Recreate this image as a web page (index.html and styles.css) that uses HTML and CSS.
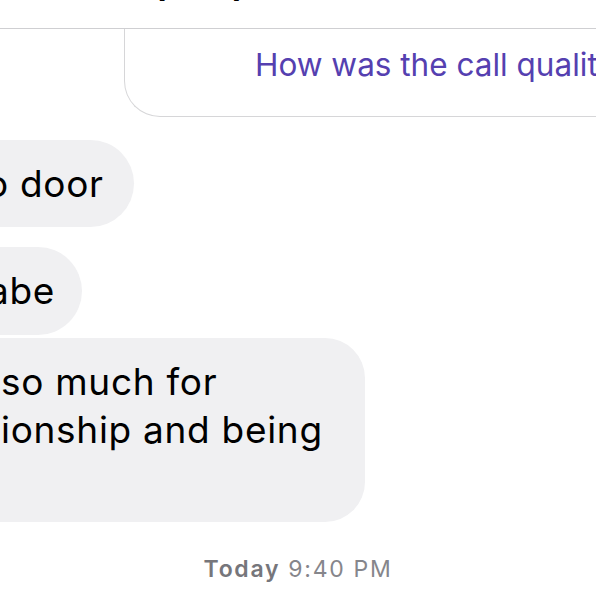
FILE: index.html
```html
<!DOCTYPE html>
<html>
<head>
<meta charset="utf-8">
<link rel="stylesheet" href="styles.css">
</head>
<body>
<div class="screen">
  <header class="topbar">
    <div class="title">(Dad)</div>
  </header>
  <div class="card">
    <div class="card-text">How was the call quality?</div>
  </div>
  <div class="thread">
    <div class="bubble b1"><span class="line cut-o">o door</span></div>
    <div class="bubble b2"><span class="line cut-a">abe</span></div>
    <div class="bubble b3">
      <span class="line">so much for</span>
      <span class="line">ionship and being</span>
      <span class="line">&nbsp;</span>
    </div>
  </div>
  <div class="stamp"><span class="day">Today</span> 9:40 PM</div>
</div>
</body>
</html>
```

FILE: styles.css
```css
html, body {
  margin: 0;
  padding: 0;
  background: #ffffff;
  overflow: hidden;
}
.screen {
  width: 596px;
  height: 596px;
  overflow: hidden;
  font-family: Inter, "Noto Sans", sans-serif;
  color: #000;
}
.topbar {
  height: 28px;
  border-bottom: 1px solid #cfcfd2;
  overflow: hidden;
}
.title {
  margin-top: -33px;
  padding-left: 153px;
  font-size: 34px;
  line-height: 34px;
  font-weight: 700;
  white-space: nowrap;
}
.card {
  margin-left: 124px;
  margin-right: -120px;
  height: 87px;
  border-left: 1px solid #d6d6d8;
  border-bottom: 1px solid #d6d6d8;
  border-bottom-left-radius: 36px;
}
.card-text {
  padding-top: 17px;
  padding-left: 130px;
  font-size: 31.5px;
  line-height: 38px;
  color: #5540b0;
  white-space: nowrap;
}
.thread {
  margin-top: 23px;
  display: flex;
  flex-direction: column;
  align-items: flex-start;
}
.bubble {
  background: #f0f0f2;
  border-radius: 0 44px 44px 0;
  padding: 20px 30px 20px 0;
  font-size: 37px;
  line-height: 48px;
  letter-spacing: 0.7px;
  white-space: nowrap;
}
.line {
  display: block;
}
.b1 {
  padding-bottom: 19px;
}
.cut-o { margin-left: -14px; }
.cut-a { margin-left: -12px; }
.b2 {
  margin-top: 20px;
  padding-right: 27px;
}
.b3 {
  margin-top: 3px;
  padding-right: 42px;
  padding-left: 1px;
  border-radius: 0 40px 40px 0;
}
.stamp {
  margin-top: 34px;
  text-align: center;
  font-size: 23px;
  line-height: 26px;
  letter-spacing: 1.7px;
  color: #86868b;
}
.day {
  font-weight: 600;
  color: #76767b;
}
```
